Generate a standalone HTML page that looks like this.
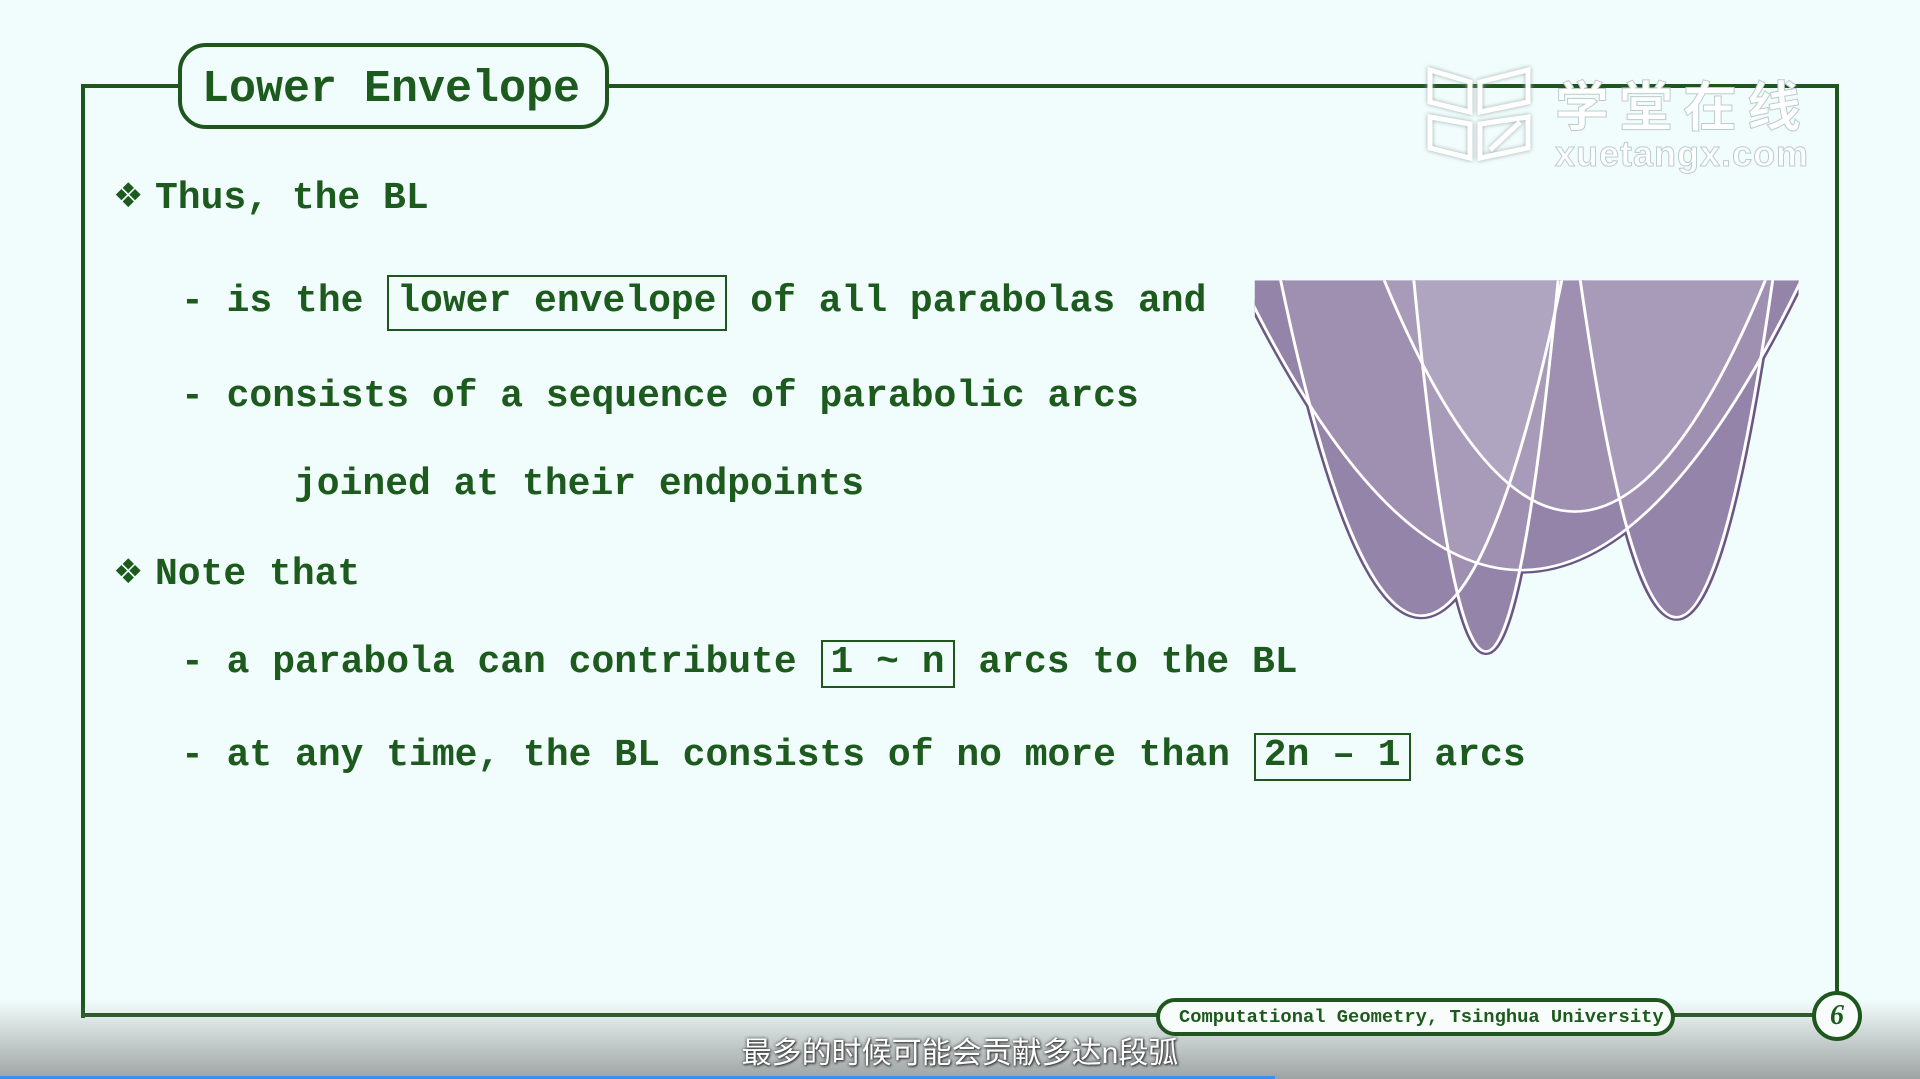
<!DOCTYPE html>
<html><head><meta charset="utf-8"><style>
*{margin:0;padding:0;box-sizing:border-box}
html,body{width:1920px;height:1079px;overflow:hidden;background:#f1fdfc}
body{position:relative;font-family:"Liberation Mono",monospace;font-weight:bold;color:#1d5a1d}
.ln{position:absolute;background:#1e561e}
.t{position:absolute;font-size:38px;line-height:38px;white-space:pre;letter-spacing:0}
.bu{position:absolute;font-size:34px;line-height:38px;font-family:"DejaVu Sans",sans-serif}
.bx{display:inline-block;border:2px solid #1e561e;padding:6px 8px 8px;margin:0 1px}
.bx2{display:inline-block;border:2px solid #1e561e;padding:2px 8px 4px;margin:0 1px}
</style></head><body>
<div class="ln" style="left:81px;top:84px;width:1758px;height:4px"></div>
<div class="ln" style="left:81px;top:84px;width:4px;height:934px"></div>
<div class="ln" style="left:1835px;top:84px;width:4px;height:934px"></div>
<div class="ln" style="left:81px;top:1013px;width:1758px;height:4px"></div>

<div style="position:absolute;left:178px;top:43px;width:431px;height:86px;border:4px solid #1e561e;border-radius:28px;background:#f1fdfc"></div>
<div style="position:absolute;left:202px;top:67px;font-size:45px;line-height:45px;white-space:pre">Lower Envelope</div>

<svg style="position:absolute;left:1420px;top:62px" width="400" height="115">
<g fill="none" stroke="#fff" stroke-width="5" style="filter:drop-shadow(0 0 2px #9aa)">
<path d="M10 8 L50 20 L50 50 L10 40 Z M10 55 L50 62 L50 96 L10 86 Z M60 20 L108 8 L108 40 L60 50 Z M60 62 L108 55 L108 86 L60 96 Z M70 88 L100 60"/>
</g>
<text x="135" y="64" font-family="Noto Sans CJK SC,sans-serif" font-size="54" fill="#fff" stroke="#bcc" stroke-width="1" letter-spacing="10">学堂在线</text>
<text x="135" y="104" font-family="Liberation Sans,sans-serif" font-size="36" fill="#fff" stroke="#bcc" stroke-width="1" letter-spacing="1">xuetangx.com</text>
</svg>

<div class="bu" style="left:113px;top:177px">❖</div>
<div class="t" style="left:155px;top:180px">Thus, the BL</div>
<div class="t" style="left:181px;top:275px">- is the <span class="bx">lower envelope</span> of all parabolas and</div>
<div class="t" style="left:181px;top:378px">- consists of a sequence of parabolic arcs</div>
<div class="t" style="left:294px;top:466px">joined at their endpoints</div>
<div class="bu" style="left:113px;top:553px">❖</div>
<div class="t" style="left:155px;top:556px">Note that</div>
<div class="t" style="left:181px;top:640px">- a parabola can contribute <span class="bx2">1 ~ n</span> arcs to the BL</div>
<div class="t" style="left:181px;top:733px">- at any time, the BL consists of no more than <span class="bx2">2n – 1</span> arcs</div>

<svg style="position:absolute;left:1240px;top:260px" width="580" height="420" viewBox="0 0 1568 1135">
<defs><clipPath id="c"><rect x="40" y="55" width="1470" height="1300"/></clipPath></defs>
<g transform="translate(0,6.6) scale(1,0.88)">
<g clip-path="url(#c)">
<g fill="none" stroke="#6b5784" stroke-width="22">
<path d="M3,55 Q760,1835 1517,55"/><path d="M390,55 Q905,1475 1420,55"/><path d="M110,55 Q490,2115 870,55"/><path d="M470,55 Q665,2335 860,55"/><path d="M920,55 Q1180,2125 1440,55"/>
</g>
<g fill="#8a76a0">
<path d="M3,55 Q760,1835 1517,55Z"/><path d="M390,55 Q905,1475 1420,55Z"/><path d="M110,55 Q490,2115 870,55Z"/><path d="M470,55 Q665,2335 860,55Z"/><path d="M920,55 Q1180,2125 1440,55Z"/>
</g>
<g fill="rgba(255,255,255,0.1)">
<path d="M3,55 Q760,1835 1517,55Z"/><path d="M390,55 Q905,1475 1420,55Z"/><path d="M110,55 Q490,2115 870,55Z"/><path d="M470,55 Q665,2335 860,55Z"/><path d="M920,55 Q1180,2125 1440,55Z"/>
</g>
<g fill="none" stroke="#fff" stroke-width="8">
<path d="M3,55 Q760,1835 1517,55"/><path d="M390,55 Q905,1475 1420,55"/><path d="M110,55 Q490,2115 870,55"/><path d="M470,55 Q665,2335 860,55"/><path d="M920,55 Q1180,2125 1440,55"/>
</g>
</g>
</g>
</svg>

<div style="position:absolute;left:0;top:1000px;width:1920px;height:79px;background:linear-gradient(rgba(150,150,150,0),rgba(130,133,132,0.75))"></div>

<div style="position:absolute;left:1156px;top:998px;width:519px;height:38px;border:4px solid #1e561e;border-radius:19px;background:#f8fdfc"></div>
<div style="position:absolute;left:1179px;top:1007px;font-size:18.8px;line-height:20px;white-space:pre">Computational Geometry, Tsinghua University</div>
<div style="position:absolute;left:1812px;top:991px;width:50px;height:50px;border:4px solid #1e561e;border-radius:50%;background:#f8fdfc;text-align:center;font-size:28px;line-height:42px;font-style:italic;font-family:'Liberation Serif',serif">6</div>

<div style="position:absolute;left:0;top:1036px;width:1920px;text-align:center;font-family:'Liberation Sans','Noto Sans CJK SC',sans-serif;font-weight:normal;font-size:30px;line-height:36px;color:#fff;text-shadow:0 0 3px #333,1px 1px 2px #333">最多的时候可能会贡献多达n段弧</div>
<div style="position:absolute;left:0;top:1076px;width:1275px;height:3px;background:#3d8ef0"></div>
</body></html>
